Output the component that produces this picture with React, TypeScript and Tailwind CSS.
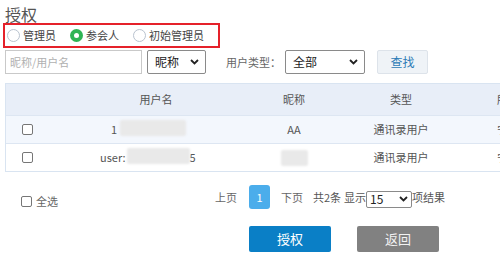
import React from "react";

const font = { fontFamily: '"Noto Sans CJK SC", "Noto Sans", sans-serif' };

function Radio({ checked, label }: { checked?: boolean; label: string }) {
  return (
    <div className="flex items-center gap-[3px] whitespace-nowrap">
      {checked ? (
        <span className="flex h-[13px] w-[13px] shrink-0 items-center justify-center rounded-full bg-[#2fb454]">
          <span className="h-[5px] w-[5px] rounded-full bg-white" />
        </span>
      ) : (
        <span className="h-[13px] w-[13px] shrink-0 rounded-full border border-[#b9c3cf] bg-white" />
      )}
      <span className="text-[11px] text-[#444]">{label}</span>
    </div>
  );
}

function Chevron() {
  return (
    <svg width="9" height="6" viewBox="0 0 9 6">
      <path d="M1 1 L4.5 4.5 L8 1" stroke="#222" strokeWidth="1.8" fill="none" />
    </svg>
  );
}

function Check() {
  return <span className="block h-[11px] w-[11px] rounded-[2px] border border-[#767676] bg-white" />;
}

function Blur({ w, h }: { w: number; h: number }) {
  return <span className="inline-block rounded-[2px] bg-[#e9e9e9] blur-[1px]" style={{ width: w, height: h }} />;
}

export default function App() {
  return (
    <div className="relative h-[274px] w-[500px] overflow-hidden bg-white whitespace-nowrap" style={font}>
      <div className="pl-[5px] pt-[4px] text-[16px] leading-[20px] text-[#555]">授权</div>
      <div className="ml-[3px] mt-[-1px] flex h-[25px] w-[217px] items-center gap-[14px] border-2 border-[#e5212a] pl-[2px]">
        <Radio label="管理员" />
        <Radio checked label="参会人" />
        <Radio label="初始管理员" />
      </div>
      <div className="mt-[2px] flex items-center pl-[5px]">
        <div className="flex h-[24px] w-[137px] items-center border border-[#c9c9c9] pl-[4px] text-[11px] text-[#b0b0b0]">
          昵称/用户名
        </div>
        <div className="ml-[5px] flex h-[24px] w-[59px] items-center justify-between rounded-[2px] border border-[#8a8a8a] pl-[7px] pr-[6px] text-[12px] text-[#222]">
          <span>昵称</span>
          <Chevron />
        </div>
        <span className="ml-[20px] text-[11px] text-[#666]">用户类型：</span>
        <div className="ml-[4px] flex h-[24px] w-[80px] items-center justify-between rounded-[2px] border border-[#8a8a8a] pl-[7px] pr-[6px] text-[12px] text-[#222]">
          <span>全部</span>
          <Chevron />
        </div>
        <div className="ml-[12px] flex h-[24px] w-[51px] items-center justify-center rounded-[2px] border border-[#dde3ea] bg-[#eff3f7] text-[12px] text-[#2c7bb6]">
          查找
        </div>
      </div>
      <div className="ml-[5px] mt-[9px] w-[560px] border border-[#d9e4f1] text-[11px] text-[#555]">
        <div className="flex h-[31px] items-center bg-[#e8eef8] text-[#555]">
          <div className="w-[43px]" />
          <div className="w-[214px] text-center">用户名</div>
          <div className="w-[62px] text-center">昵称</div>
          <div className="w-[152px] text-center">类型</div>
          <div className="w-[80px] pl-[20px]">所属部门</div>
        </div>
        <div className="flex h-[28px] items-center border-t border-[#dde6f2] bg-[#f3f7fd]">
          <div className="flex w-[43px] pl-[16px]"><Check /></div>
          <div className="flex w-[214px] items-center pl-[62px]">
            <span>1</span>
            <span className="ml-[3px]"><Blur w={66} h={16} /></span>
          </div>
          <div className="w-[62px] text-center">AA</div>
          <div className="w-[152px] text-center">通讯录用户</div>
          <div className="w-[80px] pl-[20px]">宁波</div>
        </div>
        <div className="flex h-[28px] items-center border-t border-[#dde6f2] bg-white">
          <div className="flex w-[43px] pl-[16px]"><Check /></div>
          <div className="flex w-[214px] items-center pl-[51px]">
            <span>user:</span>
            <span className="ml-[1px]"><Blur w={63} h={16} /></span>
            <span>5</span>
          </div>
          <div className="flex w-[62px] justify-center"><Blur w={27} h={16} /></div>
          <div className="w-[152px] text-center">通讯录用户</div>
          <div className="w-[80px] pl-[20px]">宁波</div>
        </div>
      </div>
      <div className="mt-[13px] flex items-start text-[11px] text-[#666]">
        <div className="mt-[8px] flex items-center gap-[4px] pl-[21px]">
          <Check />
          <span>全选</span>
        </div>
        <div className="ml-[157px] flex h-[24px] items-center">
          <span>上页</span>
          <span className="ml-[12px] flex h-[24px] w-[21px] items-center justify-center rounded-[3px] bg-[#4badeb] text-white">1</span>
          <span className="ml-[11px]">下页</span>
          <span className="ml-[10px] text-[#555]">共2条</span>
          <span className="ml-[3px] text-[#555]">显示</span>
          <div className="mt-[4px] flex h-[17px] w-[46px] items-center justify-between rounded-[2px] border border-[#8a8a8a] pl-[3px] pr-[3px] text-[12px] text-[#222]">
            <span>15</span>
            <Chevron />
          </div>
          <span className="text-[#555]">项结果</span>
        </div>
      </div>
      <div className="mt-[16px] flex pl-[249px]">
        <div className="flex h-[26px] w-[82px] items-center justify-center rounded-[2px] bg-[#0a7fc6] text-[13px] text-white">授权</div>
        <div className="ml-[26px] flex h-[26px] w-[82px] items-center justify-center rounded-[2px] bg-[#818181] text-[13px] text-[#f2f2f2]">返回</div>
      </div>
    </div>
  );
}
